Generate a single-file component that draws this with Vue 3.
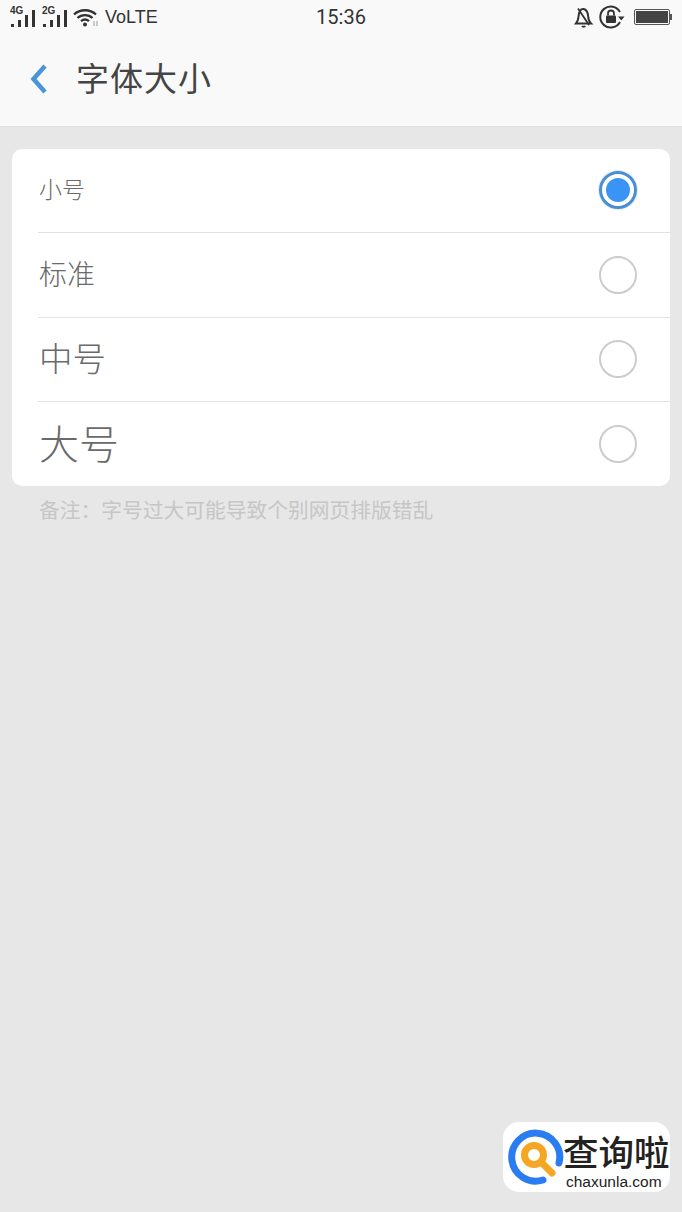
<script setup>
import { ref } from "vue";

const selected = ref("small");

const sizes = [
  { value: "small", label: "小号", font: 23 },
  { value: "standard", label: "标准", font: 28 },
  { value: "medium", label: "中号", font: 33.5 },
  { value: "large", label: "大号", font: 40 },
];

const barHeights = [3, 7, 12, 17];
</script>

<template>
  <div class="page">
    <header class="top">
      <div class="status">
        <div class="status-left">
          <div class="signal">
            <span class="net">4G</span>
            <svg width="26" height="18" viewBox="0 0 26 18">
              <rect v-for="(h, i) in barHeights" :key="i" :x="1 + i * 7" :y="18 - h" width="3" :height="h" fill="#333" />
            </svg>
          </div>
          <div class="signal">
            <span class="net">2G</span>
            <svg width="26" height="18" viewBox="0 0 26 18">
              <rect v-for="(h, i) in barHeights" :key="i" :x="1 + i * 7" :y="18 - h" width="3" :height="h" fill="#333" />
            </svg>
          </div>
          <svg class="wifi" width="26" height="19" viewBox="0 0 26 19">
            <path d="M1 6.5C7 .8 17 .8 23 6.5M4.5 10C8.5 6.2 15.500 6.200 19.500 10M8 13.200C10.500 11 13.500 11 16 13.200" fill="none" stroke="#333" stroke-width="2.300" />
            <circle cx="12" cy="16.500" r="2" fill="#333" />
            <path d="M21 13v5M24 13v5" stroke="#aaa" stroke-width="1.200" />
          </svg>
          <span class="volte">VoLTE</span>
        </div>
        <span class="time">15:36</span>
        <div class="status-right">
          <svg width="20" height="22" viewBox="0 0 20 22">
            <path d="M2 17.500h15c-2.200-2-2.600-4-2.800-7-.3-4-1.700-7-4.600-7.500C6.500 2.500 5 6 4.600 10c-.3 3-.8 5.500-2.600 7.500zM8 20c.8 1 2.500 1 3.300 0" fill="none" stroke="#333" stroke-width="2" />
            <path d="M4 2.500 15 19" stroke="#333" stroke-width="1.800" />
          </svg>
          <svg width="26" height="24" viewBox="0 0 26 24">
            <path d="M21 17A10.500 10.500 0 1 1 21 7" fill="none" stroke="#333" stroke-width="2" />
            <path d="M19 11.500h6.500l-3.200 4z" fill="#333" />
            <rect x="7" y="10.500" width="10" height="7.500" rx="1" fill="#333" />
            <path d="M9 10.500V8.500a3 3 0 0 1 6 0v2" fill="none" stroke="#333" stroke-width="1.800" />
          </svg>
          <div class="battery">
            <div class="battery-body"><div class="battery-fill"></div></div>
            <div class="battery-tip"></div>
          </div>
        </div>
      </div>
      <div class="title-bar">
        <svg class="back" width="20" height="32" viewBox="0 0 20 32">
          <path d="M16 3 4.500 16 16 29" fill="none" stroke="#4a94d8" stroke-width="4.500" />
        </svg>
        <h1>字体大小</h1>
      </div>
    </header>

    <main class="content">
      <ul class="card">
        <li v-for="size in sizes" :key="size.value" class="row" @click="selected = size.value">
          <span class="label" :style="{ fontSize: size.font + 'px' }">{{ size.label }}</span>
          <span class="radio" :class="{ on: selected === size.value }"></span>
        </li>
      </ul>
      <p class="note">备注：字号过大可能导致个别网页排版错乱</p>
    </main>

    <div class="watermark">
      <svg width="62" height="62" viewBox="0 0 62 62">
        <path d="M52 37A24 24 0 1 0 36 54" fill="none" stroke="#2a7df0" stroke-width="7" stroke-linecap="round" />
        <circle cx="27" cy="29" r="9.500" fill="none" stroke="#f5a623" stroke-width="7" />
        <path d="M36 38 45 47" stroke="#f5a623" stroke-width="7" stroke-linecap="round" />
      </svg>
      <div class="wm-text">
        <span class="wm-cn">查询啦</span>
        <span class="wm-en">chaxunla.com</span>
      </div>
    </div>
  </div>
</template>

<style scoped>
.page {
  position: relative;
  height: 1212px;
  overflow: hidden;
  background: #e7e7e7;
  font-family: "Noto Sans CJK SC", "Noto Sans", sans-serif;
}

.top {
  height: 127px;
  box-sizing: border-box;
  background: #f9f9f9;
  border-bottom: 1px solid #dedede;
}

.status {
  display: grid;
  grid-template-columns: 1fr auto 1fr;
  align-items: center;
  height: 34px;
  padding: 0 10px;
  color: #333;
}

.status-left {
  display: flex;
  align-items: center;
  gap: 6px;
}

.signal {
  position: relative;
  width: 26px;
  height: 20px;
  display: flex;
  align-items: flex-end;
}

.net {
  position: absolute;
  left: 0;
  top: -1px;
  font-family: "Liberation Sans", sans-serif;
  font-size: 10px;
  font-weight: 700;
  line-height: 10px;
}

.wifi {
  margin-left: -1px;
}

.volte {
  font-family: "Liberation Sans", sans-serif;
  font-size: 18px;
  margin-left: 0;
}

.time {
  font-family: "Roboto", sans-serif;
  font-size: 20px;
}

.status-right {
  display: flex;
  justify-content: flex-end;
  align-items: center;
  gap: 5px;
}

.battery {
  display: flex;
  align-items: center;
  margin-left: 4px;
}

.battery-body {
  width: 36px;
  height: 16px;
  box-sizing: border-box;
  padding: 1px;
  border: 1px solid #555;
  border-radius: 2px;
}

.battery-fill {
  height: 100%;
  background: #444;
}

.battery-tip {
  width: 2px;
  height: 6px;
  background: #555;
}

.title-bar {
  display: flex;
  align-items: center;
  height: 90px;
  padding: 0 0 0 29px;
}

.back {
  flex: none;
}

h1 {
  margin: 0 0 0 27px;
  padding-bottom: 3px;
  font-size: 33px;
  font-weight: 400;
  color: #444;
  line-height: 1;
  letter-spacing: 1px;
}

.content {
  padding: 22px 12px 0;
}

.card {
  margin: 0;
  padding: 0;
  list-style: none;
  background: #fff;
  border-radius: 10px;
}

.row {
  display: flex;
  align-items: center;
  justify-content: space-between;
  height: 84.250px;
  box-sizing: border-box;
  margin-left: 26px;
  padding-right: 33px;
  border-bottom: 1px solid #e2e2e2;
}

.row:last-child {
  border-bottom: none;
}

.row:first-child .radio {
  margin-bottom: 2px;
}

.label {
  padding-bottom: 4px;
  margin-left: 1px;
  color: #6a6a6a;
  line-height: 1;
  font-weight: 300;
}

.radio {
  width: 38px;
  height: 38px;
  box-sizing: border-box;
  border: 2px solid #cccccc;
  border-radius: 50%;
}

.radio.on {
  position: relative;
  border: 3px solid #4b8fd0;
  box-shadow: 0 0 0 1px #dbeefc;
}

.radio.on::after {
  content: "";
  position: absolute;
  inset: 4px;
  border-radius: 50%;
  background: #3a94f5;
}

.note {
  margin: 12px 0 0 27px;
  font-size: 20.750px;
  line-height: 22px;
  color: #c6c6c6;
}

.watermark {
  position: absolute;
  left: 503px;
  top: 1122px;
  width: 167px;
  height: 70px;
  display: flex;
  align-items: center;
  background: #fff;
  border-radius: 16px;
}

.watermark svg {
  flex: none;
  margin-left: 4px;
}

.wm-text {
  display: flex;
  flex-direction: column;
  align-items: flex-start;
  margin-left: -6px;
  padding-top: 8px;
}

.wm-cn {
  font-size: 35.500px;
  line-height: 36px;
  color: #222;
  font-weight: 500;
  white-space: nowrap;
}

.wm-en {
  margin: 5px 0 0 3px;
  font-family: "Liberation Sans", sans-serif;
  font-size: 15.500px;
  line-height: 16px;
  color: #222;
  white-space: nowrap;
}
</style>
